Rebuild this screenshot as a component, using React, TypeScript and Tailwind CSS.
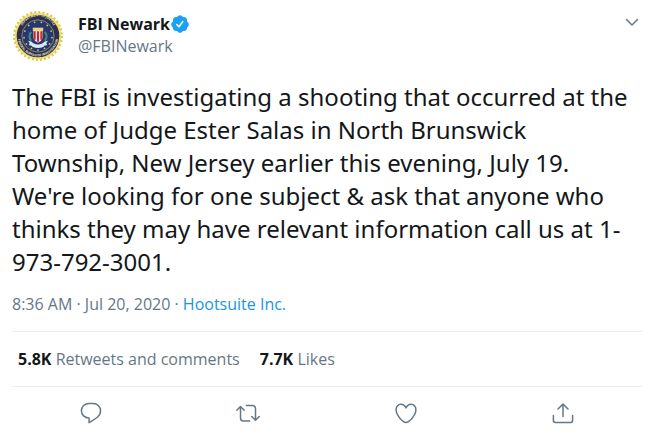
import type { ReactNode } from 'react';

const STATS = [
  { value: '5.8K', label: 'Retweets and comments' },
  { value: '7.7K', label: 'Likes' },
];

const ACTIONS: { label: string; icon: ReactNode }[] = [
  {
    label: 'Reply',
    icon: (
      <path d="M9.900 2.400h4.200c4 0 7.500 3.200 7.500 7.400 0 2.400-1.100 4.600-3 6.200-1.500 1.300-6.300 4.300-8.500 5.600v-4.700h-.3C5.700 16.900 2.400 13.900 2.400 9.800c0-4.200 3.500-7.400 7.500-7.400z" />
    ),
  },
  {
    label: 'Retweet',
    icon: (
      <>
        <path d="M.8 9.200 4.500 5.500l3.700 3.700M4.500 5.700v11.400a3 3 0 0 0 3 3h6.100" />
        <path d="M10.400 4.600h6.100a3 3 0 0 1 3 3V19M15.800 15.500l3.700 3.700 3.700-3.700" />
      </>
    ),
  },
  {
    label: 'Like',
    icon: (
      <path d="M12 21.500C9.400 21.400 2.100 15 2.100 8.600c0-3 2.200-5.400 4.900-5.400 3.200 0 5 3.700 5 3.700s1.800-3.700 5-3.700c2.700 0 4.900 2.400 4.900 5.400 0 6.400-7.300 12.800-9.900 12.900z" />
    ),
  },
  {
    label: 'Share',
    icon: (
      <>
        <path d="M12 15.500V3M7 8l5-5 5 5" />
        <path d="M2.400 14.600v5a1.900 1.900 0 0 0 1.900 1.900h15.400a1.900 1.900 0 0 0 1.900-1.900v-5" />
      </>
    ),
  },
];

function Seal() {
  const stars = Array.from({ length: 13 }, (_, i) => {
    const a = ((i * 360) / 13 + 90) * (Math.PI / 180);
    return { x: 50 + 27 * Math.cos(a), y: 50 + 27 * Math.sin(a) };
  });
  return (
    <svg viewBox="0 0 100 100" className="size-[52px] shrink-0" role="img" aria-label="FBI seal">
      <circle cx="50" cy="50" r="45" fill="#f3df6c" />
      <circle cx="50" cy="50" r="46" fill="none" stroke="#dfc648" strokeWidth="4" strokeDasharray="4 4" />
      <circle cx="50" cy="50" r="41" fill="#2b3050" />
      <circle cx="50" cy="50" r="31" fill="#26376f" stroke="#a99d6c" strokeWidth="1.500" />
      <path id="seal-top" d="M16 46a34 34 0 0 1 68 0" fill="none" />
      <path id="seal-bottom" d="M11 50a39 39 0 0 0 78 0" fill="none" />
      <g fill="#e6e1c4" fontSize="6" fontWeight="700">
        <text textAnchor="middle">
          <textPath href="#seal-top" startOffset="50%">DEPARTMENT OF JUSTICE</textPath>
        </text>
        <text textAnchor="middle">
          <textPath href="#seal-bottom" startOffset="50%">FEDERAL BUREAU OF INVESTIGATION</textPath>
        </text>
      </g>
      {stars.map((s, i) => (
        <circle key={i} cx={s.x} cy={s.y} r="1.700" fill="#d6c66b" />
      ))}
      <path d="M37 42q-7 9 0 17M63 42q7 9 0 17" fill="none" stroke="#3c8a78" strokeWidth="4" />
      <path d="M41 36h18v18q-2 6-9 9-7-3-9-9z" fill="#f3e9e2" />
      <path d="M43.500 41v16M50 41v20M56.500 41v16" stroke="#c22738" strokeWidth="4" />
      <path d="M40 34h20v6H40z" fill="#ead47a" />
      <path d="M31 59q7 0 10 5 9 5 18 0 3-5 10-5l-3 5 2 4q-6-1-8 3-10 4-20 0-2-4-8-3l2-4z" fill="#dce8f2" />
    </svg>
  );
}

function VerifiedBadge() {
  return (
    <svg viewBox="0 0 24 24" className="size-5" role="img" aria-label="Verified account">
      <path
        fill="#1da1f2"
        d="M22.500 12.500c0-1.580-.875-2.950-2.148-3.600.154-.435.238-.905.238-1.400 0-2.210-1.710-3.998-3.818-3.998-.47 0-.92.084-1.336.250C14.818 2.415 13.510 1.500 12 1.500s-2.816.917-3.437 2.250c-.415-.165-.866-.250-1.336-.250-2.110 0-3.818 1.790-3.818 4 0 .494.083.964.237 1.400-1.272.650-2.147 2.018-2.147 3.600 0 1.495.782 2.798 1.942 3.486-.020.170-.032.340-.032.514 0 2.210 1.708 4 3.818 4 .470 0 .920-.086 1.335-.250.620 1.334 1.926 2.250 3.437 2.250 1.512 0 2.818-.916 3.437-2.250.415.163.865.248 1.336.248 2.110 0 3.818-1.790 3.818-4 0-.174-.012-.344-.033-.513 1.158-.687 1.943-1.990 1.943-3.484z"
      />
      <path d="m8 12.500 2.800 2.800 4.600-6.300" fill="none" stroke="#fff" strokeWidth="1.700" strokeLinecap="round" strokeLinejoin="round" />
    </svg>
  );
}

export default function App() {
  return (
    <article className="min-h-screen bg-white pt-[10px] pr-2 pl-3 font-['Open_Sans','Noto_Sans',sans-serif] text-base leading-[22px] text-[#657786]">
      <header className="flex items-start gap-[14px]">
        <Seal />
        <div className="min-w-0 flex-1 pt-[3px]">
          <div className="flex items-center">
            <span className="font-bold text-[#14171a]">FBI Newark</span>
            <VerifiedBadge />
          </div>
          <div>@FBINewark</div>
        </div>
        <button type="button" aria-label="More" className="mt-1 mr-[2px] text-[#657786]">
          <svg viewBox="0 0 16 16" className="size-4" fill="none" stroke="currentColor" strokeWidth="1.500" strokeLinecap="round" strokeLinejoin="round">
            <path d="m2.500 5.500 5.500 5.500 5.500-5.500" />
          </svg>
        </button>
      </header>

      <p className="mt-[18px] font-['Noto_Sans','Open_Sans',sans-serif] text-2xl leading-[33px] text-[#14171a]">
        The FBI is investigating a shooting that occurred at the home of Judge Ester Salas in North Brunswick
        Township, New Jersey earlier this evening, July 19.
        <br />
        We're looking for one subject &amp; ask that anyone who thinks they may have relevant information call us
        at 1-973-792-3001.
      </p>

      <div className="mt-[15px] pb-4">
        <time dateTime="2020-07-20T08:36">8:36 AM · Jul 20, 2020</time>
        {' · '}
        <a href="#source" className="text-[#1b95e0]">Hootsuite Inc.</a>
      </div>

      <div className="flex gap-5 border-y border-[#e6ecf0] px-[6px] py-4">
        {STATS.map((stat) => (
          <div key={stat.label}>
            <span className="font-bold text-[#14171a]">{stat.value}</span> {stat.label}
          </div>
        ))}
      </div>

      <div className="grid grid-cols-4 justify-items-center pt-[14px]">
        {ACTIONS.map((action) => (
          <button key={action.label} type="button" aria-label={action.label}>
            <svg viewBox="0 0 24 24" className="size-6" fill="none" stroke="currentColor" strokeWidth="1.500" strokeLinecap="round" strokeLinejoin="round">
              {action.icon}
            </svg>
          </button>
        ))}
      </div>
    </article>
  );
}
